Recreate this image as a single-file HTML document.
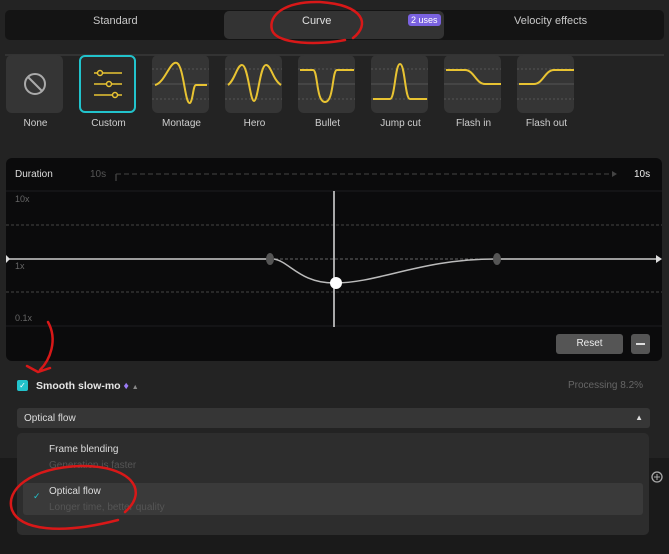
<!DOCTYPE html><html><head><style>
*{margin:0;padding:0;box-sizing:border-box}
body{width:669px;height:554px;background:#232323;font-family:"Liberation Sans",sans-serif;position:relative;overflow:hidden;color:#ddd}
.a{position:absolute}
.tile{position:absolute;top:55px;width:57px;height:58px;background:#353535;border-radius:6px}
.lbl{position:absolute;top:118px;width:73px;text-align:center;font-size:10px;color:#cfcfcf}
</style></head><body>
<div class="a" style="left:0;top:458px;width:669px;height:96px;background:#1a1a1a"></div>
<div class="a" style="left:5px;top:10px;width:659px;height:30px;background:#141414;border-radius:5px"></div>
<div class="a" style="left:224px;top:11px;width:220px;height:28px;background:#333;border-radius:5px"></div>
<div class="a" style="left:93px;top:15px;font-size:11px;color:#c8c8c8">Standard</div>
<div class="a" style="left:302px;top:15px;font-size:11px;color:#e0e0e0">Curve</div>
<div class="a" style="left:408px;top:14px;font-size:9px;color:#fff;background:#7a62e0;border-radius:3px;padding:1px 3px">2 uses</div>
<div class="a" style="left:514px;top:15px;font-size:11px;color:#c8c8c8">Velocity effects</div>
<div class="a" style="left:5px;top:54px;width:659px;height:2px;background:#333"></div>
<div class="tile" style="left:6px"></div>
<div class="tile" style="left:79px;background:#2a2a2a;border:2px solid #22c3cc"></div>
<div class="tile" style="left:152px"></div><div class="tile" style="left:225px"></div><div class="tile" style="left:298px"></div><div class="tile" style="left:371px"></div><div class="tile" style="left:444px"></div><div class="tile" style="left:517px"></div>
<svg class="a" style="left:0;top:55px" width="669" height="60">
<circle cx="35" cy="29" r="10" fill="none" stroke="#aaa" stroke-width="2"/><line x1="28" y1="22" x2="42" y2="36" stroke="#aaa" stroke-width="2"/>
<g stroke="#e8c332" stroke-width="1.5" fill="#2a2a2a"><line x1="94" y1="18" x2="122" y2="18"/><line x1="94" y1="29" x2="122" y2="29"/><line x1="94" y1="40" x2="122" y2="40"/><circle cx="100" cy="18" r="2.5"/><circle cx="109" cy="29" r="2.5"/><circle cx="115" cy="40" r="2.5"/></g>
<g stroke="#555" stroke-dasharray="2 2"><path d="M152 14h57M152 44h57M225 14h57M225 44h57M298 14h57M298 44h57M371 14h57M371 44h57M444 14h57M444 44h57M517 14h57M517 44h57"/></g>
<g stroke="#555"><path d="M152 29h57M225 29h57M298 29h57M371 29h57M444 29h57M517 29h57"/></g>
<g stroke="#e8c332" stroke-width="2" fill="none">
<path d="M155 30C165 28 170 5 177 8 C184 12 185 50 190 48 C193 46 193 30 196 30H207"/>
<path d="M228 30C235 25 237 10 242 10C248 10 250 46 254 46C258 46 260 10 266 10C271 10 273 25 281 30"/>
<path d="M300 15H313C318 15 316 47 325 47C334 47 332 15 337 15H354"/>
<path d="M373 44H390C395 44 395 9 400 9C405 9 405 44 410 44H427"/>
<path d="M446 15H465C474 15 476 29 485 29H501"/>
<path d="M519 29H534C543 29 545 15 554 15H574"/>
</g></svg>
<div class="lbl" style="left:-1px">None</div><div class="lbl" style="left:72px">Custom</div><div class="lbl" style="left:145px">Montage</div><div class="lbl" style="left:218px">Hero</div><div class="lbl" style="left:291px">Bullet</div><div class="lbl" style="left:364px">Jump cut</div><div class="lbl" style="left:437px">Flash in</div><div class="lbl" style="left:510px">Flash out</div>
<div class="a" style="left:6px;top:158px;width:656px;height:203px;background:#0b0b0c;border-radius:6px"></div>
<div class="a" style="left:15px;top:169px;font-size:10px;color:#ddd">Duration</div>
<div class="a" style="left:90px;top:169px;font-size:10px;color:#555">10s</div>
<div class="a" style="left:634px;top:169px;font-size:10px;color:#eee">10s</div>
<div class="a" style="left:15px;top:194px;font-size:9px;color:#666">10x</div>
<div class="a" style="left:15px;top:261px;font-size:9px;color:#666">1x</div>
<div class="a" style="left:15px;top:313px;font-size:9px;color:#666">0.1x</div>
<svg class="a" style="left:0;top:150px" width="669" height="220">
<path d="M116 24V31" stroke="#555"/><path d="M116 24H612" stroke="#444" stroke-dasharray="5 3"/><path d="M612 21l5 3-5 3z" fill="#444"/>
<path d="M6 41H662" stroke="#1d1d1f"/><path d="M6 176H662" stroke="#1d1d1f"/>
<path d="M6 75H662" stroke="#444" stroke-dasharray="3 2"/><path d="M6 142H662" stroke="#444" stroke-dasharray="3 2"/><path d="M270 109H496" stroke="#666" stroke-dasharray="3 2"/>
<path d="M8 109H268M498 109H656" stroke="#ccc" stroke-width="1.5"/><path d="M656 105l6 4-6 4z M6 105l4 4-4 4z" fill="#ddd"/>
<path d="M274 109C290 112 300 133 334 133C380 133 420 109 496 109" fill="none" stroke="#bbb" stroke-width="1.5"/>
<line x1="334" y1="41" x2="334" y2="177" stroke="#ddd" stroke-width="1.5"/>
<ellipse cx="270" cy="109" rx="4" ry="6" fill="#555"/><ellipse cx="497" cy="109" rx="4" ry="6" fill="#555"/>
<circle cx="336" cy="133" r="6" fill="#fff"/>
</svg>
<div class="a" style="left:556px;top:334px;width:67px;height:20px;background:#555;border-radius:3px;font-size:10px;color:#eee;text-align:center;line-height:20px">Reset</div>
<div class="a" style="left:631px;top:334px;width:19px;height:20px;background:#555;border-radius:3px"></div>
<div class="a" style="left:636px;top:343px;width:9px;height:2px;background:#ddd"></div>
<div class="a" style="left:17px;top:380px;width:11px;height:11px;background:#22c3cc;border-radius:2px;color:#fff;font-size:8px;text-align:center;line-height:11px">✓</div>
<div class="a" style="left:36px;top:380px;font-size:10.5px;color:#e5e5e5;font-weight:bold">Smooth slow-mo <span style="color:#9b7cf5">♦</span> <span style="color:#888;font-size:7px">▲</span></div>
<div class="a" style="left:568px;top:380px;font-size:10px;color:#666">Processing 8.2%</div>
<div class="a" style="left:17px;top:408px;width:633px;height:20px;background:#363636;border-radius:3px;font-size:10px;color:#ddd;padding:5px 7px">Optical flow<span style="float:right;font-size:8px">▲</span></div>
<div class="a" style="left:17px;top:433px;width:632px;height:102px;background:#2d2d2d;border-radius:5px"></div>
<div class="a" style="left:23px;top:483px;width:620px;height:32px;background:#3a3a3a;border-radius:3px"></div>
<div class="a" style="left:49px;top:444px;font-size:10px;color:#ddd">Frame blending</div>
<div class="a" style="left:49px;top:460px;font-size:10px;color:#555">Generation is faster</div>
<div class="a" style="left:33px;top:491px;font-size:9px;color:#22c3cc">✓</div>
<div class="a" style="left:49px;top:486px;font-size:10px;color:#ddd">Optical flow</div>
<div class="a" style="left:49px;top:502px;font-size:10px;color:#555">Longer time, better quality</div>
<svg class="a" style="left:0;top:0" width="669" height="554">
<circle cx="657" cy="477" r="5" fill="none" stroke="#aaa" stroke-width="1.3"/><path d="M654 477h6M657 474v6" stroke="#aaa"/>
<g fill="none" stroke="#d81818" stroke-width="2.5" stroke-linecap="round">
<path d="M353 38C370 25 365 5 320 2C285 1 268 15 272 30C277 45 320 45 345 40"/>
<path d="M48 322C58 340 50 360 40 370M27 366L38 372L50 368"/>
<path d="M125 512C150 490 130 465 80 466C30 468 5 490 12 510C20 530 60 535 118 520"/>
</g></svg>
</body></html>
